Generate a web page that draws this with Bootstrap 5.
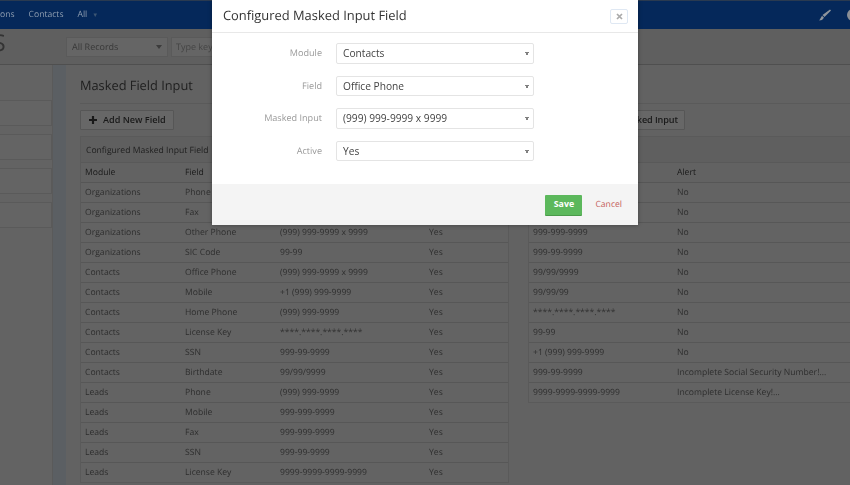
<!DOCTYPE html>
<html lang="en"><head><meta charset="utf-8"><title>Masked Field Input</title>
<link href="https://cdn.jsdelivr.net/npm/bootstrap@5.3.0/dist/css/bootstrap.min.css" rel="stylesheet">
<style>
html,body{height:100%;overflow:hidden}
body{background:#616161;color:#2c2c2c;font-family:"Open Sans",sans-serif;font-size:10px;line-height:1.3;text-rendering:geometricPrecision}
.topbar,.subbar,.shell,.dlg{filter:blur(.35px)}
.topbar{height:29px;background:#05285a;border-top:1px solid #2a3a50;color:#8e9db0;font-size:8.6px;gap:14px;overflow:hidden}
.topbar .caret-mini{color:#3d5673;font-size:6px;margin-left:5px}
.brush{width:12px;height:12px}
.ring{width:12px;height:12px;border-radius:50%;background:#8b8f95;margin-right:-9px}
.subbar{height:36px;background:#5f5f5f;border-bottom:1px solid #4f4f4f}
.pageletter{font-size:23px;line-height:1;color:#333;margin-left:-7px;width:73px;margin-bottom:9px}
.fake-filter{width:102px;height:20px;background:#656565;border:1px solid #5a5a5a;color:#383838;padding:0 5px;font-size:9px}
.fake-key{width:70px;height:20px;background:#656565;border:1px solid #5a5a5a;margin-left:3px;color:#454545;padding:0 4px;overflow:hidden;white-space:nowrap;font-size:9px}
.tri{width:0;height:0;border-left:3px solid transparent;border-right:3px solid transparent;border-top:4px solid #3c3c3c}
.shell{height:420px}
.side{width:53px;background:#636363;padding-top:35px;border-right:1px solid #5a5a5a}
.side-item{height:26px;border:1px solid #5a5a5a;border-left:0;background:#646464;margin-bottom:8px}
.gutter{width:13px;background:#5b5f63}
.work{flex:1;min-width:0;padding:0 0 0 14px;background:#626262}
.work-title{font-size:12.8px;font-weight:500;color:#202020;margin:0;height:39px;line-height:40px;border-bottom:1px solid #5a5a5a}
.tool-btn{height:20px;background:#676767;border:1px solid #565656;border-radius:1px;color:#1a1a1a;font-size:9.1px;font-weight:600;padding:0;display:flex;align-items:center}
.btn-left{width:94px;padding-left:8px;gap:6px}
.btn-right{width:157px;padding:0 6px;margin-left:354px;justify-content:flex-end;letter-spacing:-.1px}
.tool-row{height:32px;padding-top:6px}
.grid-pane{background:#636363;border:1px solid #5a5a5a;border-radius:0;margin:0}
.pane-left{width:429px;flex:none}
.pane-right{flex:1;min-width:0;margin-left:19px;border-right:0}
.pane-head{height:26px;background:#5f5f5f;border:0;border-bottom:1px solid #595959;border-radius:0!important;padding:0 5px;line-height:27px;color:#1e1e1e;font-size:8.6px;font-weight:400}
.grid-table{margin:0;table-layout:fixed;--bs-table-bg:transparent;--bs-table-color:#2e2e2e;border-color:#575757;font-size:8.6px}
.grid-table th,.grid-table td{height:20px;padding:0 4px;vertical-align:middle;white-space:nowrap;border-bottom:1px solid #575757;box-shadow:none;line-height:1}
.grid-table th{height:19px;font-weight:500;color:#1a1a1a;background:#626262;border-bottom:1px solid #565656}
.grid-table tr:last-child td{border-bottom:0}
.four-cols th:nth-child(1){width:100px}
.four-cols th:nth-child(2){width:95px}
.four-cols th:nth-child(3){width:149px}
.two-cols th:nth-child(1){width:144px}
.modal-wide{--bs-modal-width:426px;max-width:426px;margin:0 auto}
.dlg{border:0;border-radius:0;background:#fff;box-shadow:0 0 4px rgba(0,0,0,.35)}
.dlg-head{height:33px;padding:0 10px 0 11px;border-bottom:1px solid #e8e8e8;border-radius:0!important}
.dlg-title{font-size:12.9px;font-weight:500;color:#333;margin:0}
.dlg-x{width:18px;height:15px;background:#fff;border:1px solid #dfe8f3;border-radius:2px;padding:0;display:flex;align-items:center;justify-content:center}
.dlg-body{height:151px;padding:10px 0 0}
.dlg-row{height:32.6px;margin:0}
.dlg-label{width:110px;padding:0;text-align:right;color:#999;font-size:9.1px;line-height:20px;flex:none}
.dlg-ctl{margin-left:14px;width:198px;flex:none;padding:0}
.dlg-select{height:20.5px;padding:0 14px 0 6px;font-size:10.2px;line-height:1.2;color:#444;border:1px solid #e4e4e4;border-radius:2px;background-color:#fff;background-image:linear-gradient(to bottom left,#808080 50%,transparent 50%),linear-gradient(to bottom right,#808080 50%,transparent 50%);background-size:2px 4px,2px 4px;background-position:right 6px top 8px,right 4px top 8px;background-repeat:no-repeat;box-shadow:none}
.dlg-foot{height:41px;background:#f4f4f4;border:0;border-radius:0!important;padding:1px 16px 0 0;gap:13px;margin:0}
.dlg-foot>*{margin:0}
.save-btn{width:37px;height:20px;padding:0;background:#5cb85c;border:0;border-radius:1px;color:#fff;font-size:8.8px;font-weight:700;box-shadow:0 1px 0 #4a9a4a}
.cancel-link{color:#c4605a;font-size:8.6px;text-decoration:none}
</style></head><body>
<nav class="topbar d-flex align-items-center">
<span>ons</span><span>Contacts</span><span>All<span class="caret-mini">▼</span></span>
<span class="ms-auto d-flex align-items-center gap-3 overflow-hidden">
<svg class="brush" viewBox="0 0 12 12"><path d="M11 .5 12 1.500 5.500 8 3.500 6zM3 6.800 5 8.800 3 11 .2 11.500z" fill="#8f959c"/></svg><span class="ring"></span></span>
</nav>
<div class="subbar d-flex align-items-center">
<span class="pageletter">S</span>
<div class="fake-filter d-flex align-items-center justify-content-between"><span>All Records</span><i class="tri"></i></div>
<div class="fake-key d-flex align-items-center">Type key</div>
</div>
<div class="shell d-flex">
<aside class="side"><div class="side-item"></div><div class="side-item"></div><div class="side-item"></div><div class="side-item"></div></aside>
<div class="gutter"></div>
<main class="work">
<h1 class="work-title">Masked Field Input</h1>
<div class="tool-row d-flex">
<button class="tool-btn btn-left" type="button"><svg width="8" height="8" viewBox="0 0 9 9"><path d="M3.300 0h2.400v3.300H9v2.400H5.700V9H3.300V5.700H0V3.300h3.300z" fill="#1a1a1a"/></svg>Add New Field</button>
<button class="tool-btn btn-right" type="button">Add New Masked Input</button>
</div>
<div class="d-flex">
<section class="grid-pane card pane-left">
<div class="pane-head card-header">Configured Masked Input Field</div>
<table class="table grid-table four-cols">
<thead><tr><th>Module</th><th>Field</th><th>Masked Input</th><th>Active</th></tr></thead>
<tbody>
<tr><td>Organizations</td><td>Phone</td><td>(999) 999-9999</td><td>Yes</td></tr>
<tr><td>Organizations</td><td>Fax</td><td>999-999-9999</td><td>Yes</td></tr>
<tr><td>Organizations</td><td>Other Phone</td><td>(999) 999-9999 x 9999</td><td>Yes</td></tr>
<tr><td>Organizations</td><td>SIC Code</td><td>99-99</td><td>Yes</td></tr>
<tr><td>Contacts</td><td>Office Phone</td><td>(999) 999-9999 x 9999</td><td>Yes</td></tr>
<tr><td>Contacts</td><td>Mobile</td><td>+1 (999) 999-9999</td><td>Yes</td></tr>
<tr><td>Contacts</td><td>Home Phone</td><td>(999) 999-9999</td><td>Yes</td></tr>
<tr><td>Contacts</td><td>License Key</td><td>****.****.****.****</td><td>Yes</td></tr>
<tr><td>Contacts</td><td>SSN</td><td>999-99-9999</td><td>Yes</td></tr>
<tr><td>Contacts</td><td>Birthdate</td><td>99/99/9999</td><td>Yes</td></tr>
<tr><td>Leads</td><td>Phone</td><td>(999) 999-9999</td><td>Yes</td></tr>
<tr><td>Leads</td><td>Mobile</td><td>999-999-9999</td><td>Yes</td></tr>
<tr><td>Leads</td><td>Fax</td><td>999-999-9999</td><td>Yes</td></tr>
<tr><td>Leads</td><td>SSN</td><td>999-99-9999</td><td>Yes</td></tr>
<tr><td>Leads</td><td>License Key</td><td>9999-9999-9999-9999</td><td>Yes</td></tr>
</tbody></table>
</section>
<section class="grid-pane card pane-right align-self-start">
<div class="pane-head card-header">&nbsp;</div>
<table class="table grid-table two-cols">
<thead><tr><th>Masked Input</th><th>Alert</th></tr></thead>
<tbody>
<tr><td>(999) 999-9999</td><td>No</td></tr>
<tr><td>(999) 999-9999 x 9999</td><td>No</td></tr>
<tr><td>999-999-9999</td><td>No</td></tr>
<tr><td>999-99-9999</td><td>No</td></tr>
<tr><td>99/99/9999</td><td>No</td></tr>
<tr><td>99/99/99</td><td>No</td></tr>
<tr><td>****.****.****.****</td><td>No</td></tr>
<tr><td>99-99</td><td>No</td></tr>
<tr><td>+1 (999) 999-9999</td><td>No</td></tr>
<tr><td>999-99-9999</td><td>Incomplete Social Security Number!...</td></tr>
<tr><td>9999-9999-9999-9999</td><td>Incomplete License Key!...</td></tr>
</tbody></table>
</section>
</div>
</main>
</div>
<div class="modal d-block" tabindex="-1">
<div class="modal-dialog modal-wide">
<div class="modal-content dlg">
<div class="modal-header dlg-head d-flex align-items-center justify-content-between">
<h5 class="modal-title dlg-title">Configured Masked Input Field</h5>
<button class="dlg-x" type="button" aria-label="Close"><svg width="7" height="7" viewBox="0 0 7 7"><path d="M1 1l5 5M6 1 1 6" stroke="#aaa" stroke-width="1.700"/></svg></button>
</div>
<form class="modal-body dlg-body">
<div class="row dlg-row"><label class="dlg-label">Module</label><div class="dlg-ctl"><select class="form-select dlg-select"><option>Contacts</option></select></div></div>
<div class="row dlg-row"><label class="dlg-label">Field</label><div class="dlg-ctl"><select class="form-select dlg-select"><option>Office Phone</option></select></div></div>
<div class="row dlg-row"><label class="dlg-label">Masked Input</label><div class="dlg-ctl"><select class="form-select dlg-select"><option>(999) 999-9999 x 9999</option></select></div></div>
<div class="row dlg-row"><label class="dlg-label">Active</label><div class="dlg-ctl"><select class="form-select dlg-select"><option>Yes</option></select></div></div>
</form>
<div class="modal-footer dlg-foot"><button class="btn save-btn" type="button">Save</button><a class="cancel-link" href="#">Cancel</a></div>
</div></div></div>
<script src="https://cdn.jsdelivr.net/npm/bootstrap@5.3.0/dist/js/bootstrap.bundle.min.js"></script>
</body></html>
